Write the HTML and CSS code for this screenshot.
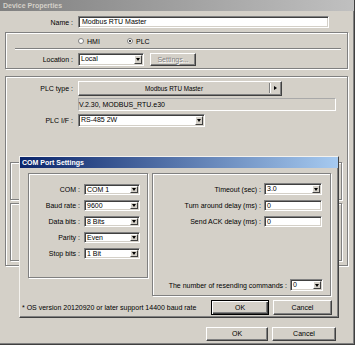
FILE: index.html
```html
<!DOCTYPE html>
<html lang="en">
  <head>
    <meta charset="UTF-8" />
    <title>Device Properties</title>
    <link rel="stylesheet" href="styles.css">
  </head>
  <body>
    <div class="window">
      <div class="caption caption--inactive">Device Properties</div>
      <div class="window__body">
        <div class="field field--name">
          <span class="field__label">Name :</span>
          <div class="edit edit--name">Modbus RTU Master</div>
        </div>

        <div class="group group--mode">
          <div class="radios">
            <span class="radio"><i class="radio__dot"></i>HMI</span>
            <span class="radio radio--on"><i class="radio__dot"></i>PLC</span>
          </div>
          <div class="sep"></div>
          <div class="field field--location">
            <span class="field__label">Location :</span>
            <div class="combo combo--location">
              <span class="combo__text">Local</span><span class="combo__btn"></span>
            </div>
            <button class="btn btn--settings" disabled>Settings...</button>
          </div>
        </div>

        <div class="group group--plc">
          <div class="field field--plctype">
            <span class="field__label">PLC type :</span>
            <div class="picker">
              <span class="picker__text">Modbus RTU Master</span><span class="picker__arrow"></span>
            </div>
          </div>
          <div class="readonly">V.2.30, MODBUS_RTU.e30</div>
          <div class="field field--plcif">
            <span class="field__label">PLC I/F :</span>
            <div class="combo combo--plcif">
              <span class="combo__text">RS-485 2W</span><span class="combo__btn"></span>
            </div>
          </div>
          <div class="group group--hidden group--hidden-top"></div>
          <div class="group group--hidden group--hidden-bottom"></div>
        </div>

        <div class="actions">
          <button class="btn btn--ok">OK</button>
          <button class="btn btn--cancel">Cancel</button>
        </div>
      </div>
    </div>

    <!-- COM Port Settings dialog, opened over Device Properties -->
    <div class="dialog">
      <div class="caption caption--active">COM Port Settings</div>
      <div class="dialog__panes">
        <div class="group group--port">
          <div class="prow">
            <span class="prow__label">COM :</span>
            <div class="combo combo--port"><span class="combo__text">COM 1</span><span class="combo__btn"></span></div>
          </div>
          <div class="prow">
            <span class="prow__label">Baud rate :</span>
            <div class="combo combo--port"><span class="combo__text">9600</span><span class="combo__btn"></span></div>
          </div>
          <div class="prow">
            <span class="prow__label">Data bits :</span>
            <div class="combo combo--port"><span class="combo__text">8 Bits</span><span class="combo__btn"></span></div>
          </div>
          <div class="prow">
            <span class="prow__label">Parity :</span>
            <div class="combo combo--port"><span class="combo__text">Even</span><span class="combo__btn"></span></div>
          </div>
          <div class="prow">
            <span class="prow__label">Stop bits :</span>
            <div class="combo combo--port"><span class="combo__text">1 Bit</span><span class="combo__btn"></span></div>
          </div>
        </div>

        <div class="group group--timing">
          <div class="trow trow--first">
            <span class="trow__label">Timeout (sec) :</span>
            <div class="combo combo--timing"><span class="combo__text">3.0</span><span class="combo__btn"></span></div>
          </div>
          <div class="trow">
            <span class="trow__label">Turn around delay (ms) :</span>
            <div class="edit edit--timing">0</div>
          </div>
          <div class="trow">
            <span class="trow__label">Send ACK delay (ms) :</span>
            <div class="edit edit--timing">0</div>
          </div>
          <div class="trow trow--resend">
            <span class="trow__label">The number of resending commands :</span>
            <div class="combo combo--resend"><span class="combo__text">0</span><span class="combo__btn"></span></div>
          </div>
        </div>
      </div>
      <div class="dialog__footer">
        <span class="note">* OS version 20120920 or later support 14400 baud rate</span>
        <button class="btn btn--default btn--dok">OK</button>
        <button class="btn btn--dcancel">Cancel</button>
      </div>
    </div>
  </body>
</html>
```

FILE: styles.css
```css
* {
  margin: 0;
  padding: 0;
  box-sizing: border-box;
}
body {
  font-family: "Liberation Sans", Arial, sans-serif;
  font-size: 7px;
  color: #000;
  background: #d4d0c8;
  position: relative;
}

/* Window frame */
.window {
  width: 355px;
  height: 345px;
  background: #d4d0c8;
  border-right: 1px solid #404040;
  border-bottom: 1px solid #404040;
  box-shadow: inset -1px -1px #808080;
}
.window__body {
  padding: 5px 7px 0 5px;
}
.caption {
  height: 11px;
  line-height: 11px;
  padding-left: 3px;
  font-weight: bold;
  white-space: nowrap;
}
.caption--inactive {
  background: linear-gradient(to right, #808080, #c0c0c0);
  color: #d4d0c8;
}
.caption--active {
  background: linear-gradient(to right, #0a246a, #a6caf0);
  color: #fff;
  padding-left: 2px;
}

/* Fields */
.field {
  display: flex;
  align-items: center;
}
.field__label {
  width: 67px;
  margin-right: 5px;
  text-align: right;
  flex-shrink: 0;
  white-space: nowrap;
}
.field--name .field__label {
  width: 68px;
}
.edit {
  height: 12px;
  line-height: 10px;
  background: #fff;
  border: 1px solid;
  border-color: #808080 #fff #fff #808080;
  box-shadow: inset 1px 1px #404040, inset -1px -1px #d4d0c8;
  padding-left: 3px;
  white-space: nowrap;
}
.edit--name {
  width: 251px;
}

.combo {
  display: flex;
  height: 12px;
  padding: 1px;
  background: #fff;
  border: 1px solid;
  border-color: #808080 #fff #fff #808080;
  box-shadow: inset 1px 1px #404040, inset -1px -1px #d4d0c8;
}
.combo__text {
  flex: 1;
  line-height: 8px;
  padding-left: 1px;
  white-space: nowrap;
}
.combo__btn {
  width: 8px;
  display: flex;
  align-items: center;
  justify-content: center;
  background: #d4d0c8;
  border: 1px solid;
  border-color: #fff #404040 #404040 #fff;
}
.combo__btn::after {
  content: "";
  border-left: 2.5px solid transparent;
  border-right: 2.5px solid transparent;
  border-top: 3px solid #000;
}

/* Buttons */
.btn {
  font: inherit;
  color: #000;
  background: #d4d0c8;
  border: 1px solid;
  border-color: #fff #404040 #404040 #fff;
  box-shadow: inset -1px -1px #808080;
  height: 14px;
  line-height: 12px;
}
.btn:disabled {
  color: #808080;
  text-shadow: 1px 1px #fff;
}
.btn--default {
  border-color: #000;
  box-shadow: inset 1px 1px #fff, inset -1px -1px #404040, inset -2px -2px #808080;
}

/* Group boxes */
.group {
  border: 1px solid #808080;
  box-shadow: inset 1px 1px #fff, 1px 1px #fff;
}
.group--mode {
  width: 343px;
  margin-top: 4px;
  padding: 2px 0 2px;
}
.radios {
  display: flex;
  align-items: center;
  height: 12px;
  padding-left: 72px;
}
.radio {
  width: 49px;
  display: flex;
  align-items: center;
  gap: 3px;
}
.radio__dot {
  width: 6px;
  height: 6px;
  border-radius: 50%;
  background: #fff;
  border: 1px solid #808080;
  display: flex;
  align-items: center;
  justify-content: center;
}
.radio--on .radio__dot::after {
  content: "";
  width: 2px;
  height: 2px;
  border-radius: 50%;
  background: #000;
}
.sep {
  margin: 1px 6px 0 9px;
  border-top: 1px solid #808080;
  border-bottom: 1px solid #fff;
}
.field--location {
  margin-top: 3px;
}
.combo--location {
  width: 66px;
  height: 13px;
}
.btn--settings {
  width: 46px;
  height: 13px;
  margin-left: 6px;
}

.group--plc {
  width: 343px;
  margin-top: 7px;
  padding: 4px 0 4px;
}
.picker {
  display: flex;
  width: 204px;
  height: 15px;
  border: 1px solid;
  border-color: #fff #404040 #404040 #fff;
  box-shadow: inset -1px -1px #808080;
}
.picker__text {
  flex: 1;
  text-align: center;
  font-size: 6.3px;
  line-height: 13px;
}
.picker__arrow {
  width: 11px;
  border-left: 1px solid #808080;
  box-shadow: inset 1px 0 #fff;
  margin: 1px 1px 2px 0;
  display: flex;
  align-items: center;
  justify-content: center;
}
.picker__arrow::after {
  content: "";
  border-top: 2.5px solid transparent;
  border-bottom: 2.5px solid transparent;
  border-left: 3px solid #000;
}
.readonly {
  width: 258px;
  height: 13px;
  line-height: 11px;
  margin: 2px 0 0 72px;
  border: 1px solid;
  border-color: #a9a9a9 #fff #fff #a9a9a9;
  white-space: nowrap;
}
.field--plcif {
  margin-top: 3px;
}
.combo--plcif {
  width: 127px;
  height: 13px;
}
.group--hidden {
  width: 332px;
  margin-left: 4px;
}
.group--hidden-top {
  height: 38px;
  margin-top: 35px;
}
.group--hidden-bottom {
  height: 58px;
  margin-top: 3px;
}

.actions {
  display: flex;
  justify-content: flex-end;
  gap: 4px;
  margin: 61px 11px 0 0;
}
.btn--ok {
  width: 62px;
}
.btn--cancel {
  width: 64px;
}

/* COM Port Settings dialog */
.dialog {
  position: absolute;
  left: 19px;
  top: 156px;
  width: 320px;
  background: #d4d0c8;
  border: 1px solid;
  border-color: #f4f2ee #404040 #404040 #f4f2ee;
  box-shadow: inset -1px -1px #808080;
}
.dialog__panes {
  display: flex;
  align-items: flex-start;
  gap: 4px;
  padding: 5px 7px 0 8px;
}
.group--port {
  width: 120px;
  padding: 10px 0 18px;
  display: flex;
  flex-direction: column;
  gap: 5px;
}
.prow {
  display: flex;
  align-items: center;
  height: 11px;
}
.prow__label {
  width: 51px;
  margin-right: 4px;
  text-align: right;
  white-space: nowrap;
}
.combo--port {
  width: 56px;
  height: 11px;
}
.combo--port .combo__text {
  line-height: 7px;
}

.group--timing {
  width: 179px;
  padding: 9px 8px 4px 0;
}
.trow {
  display: flex;
  align-items: center;
  justify-content: flex-end;
  height: 11px;
  margin-top: 5px;
}
.trow--first {
  height: 12px;
  margin-top: 0;
}
.trow--resend {
  height: 12px;
  margin-top: 52px;
}
.trow__label {
  margin-right: 3px;
  white-space: nowrap;
}
.combo--timing {
  width: 58px;
}
.edit--timing {
  width: 58px;
  height: 11px;
  line-height: 9px;
  padding-left: 2px;
}
.combo--resend {
  width: 33px;
  margin-right: -1px;
}

.dialog__footer {
  display: flex;
  align-items: center;
  gap: 4px;
  margin-top: 4px;
  padding: 0 6px 2px 2px;
}
.note {
  flex: 1;
  white-space: nowrap;
}
.btn--dok {
  width: 58px;
  height: 15px;
}
.btn--dcancel {
  width: 59px;
  height: 15px;
}
```
